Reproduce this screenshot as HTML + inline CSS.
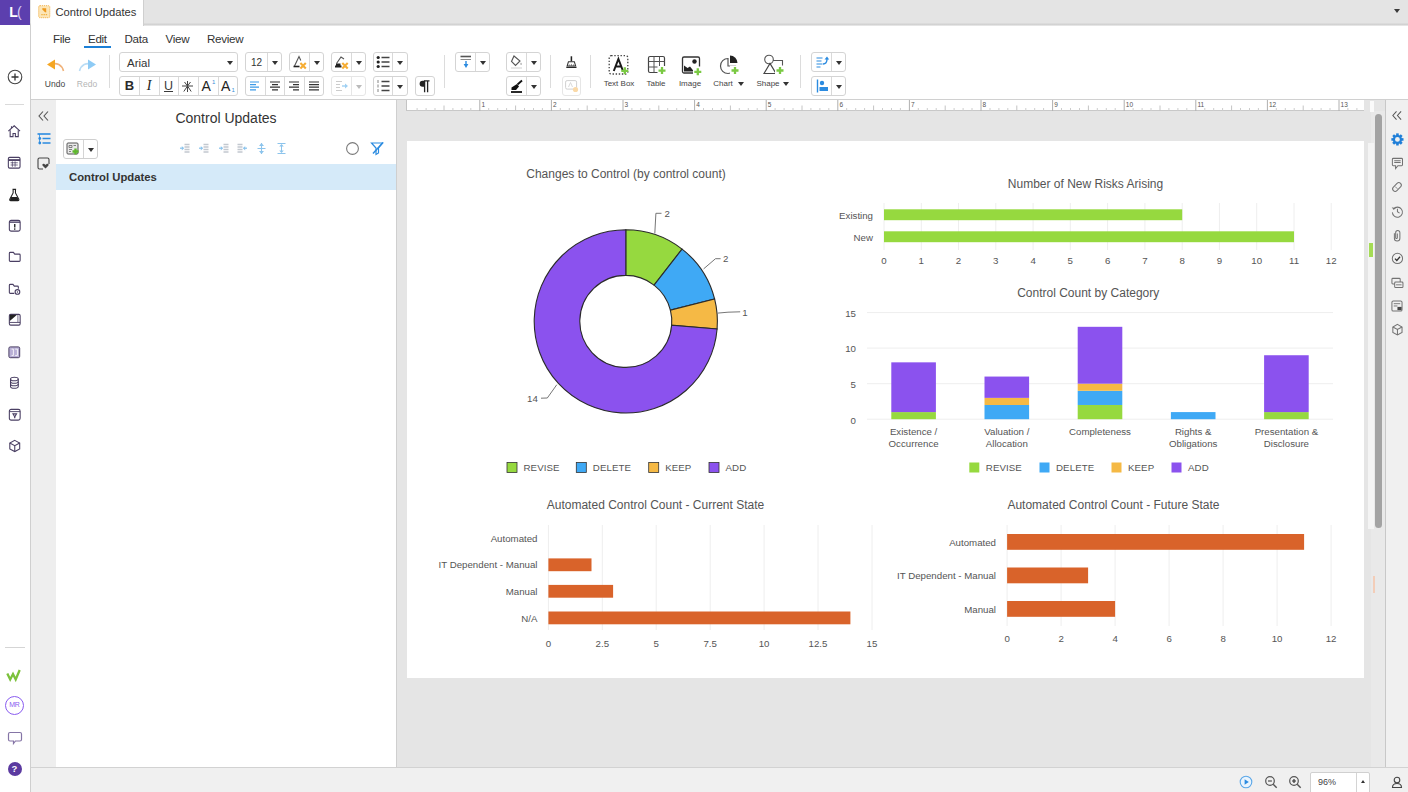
<!DOCTYPE html><html><head><meta charset="utf-8"><title>Control Updates</title><style>
*{box-sizing:border-box;margin:0;padding:0}
html,body{width:1408px;height:792px;overflow:hidden;background:#e5e5e5;font-family:"Liberation Sans",sans-serif;color:#333}
.abs{position:absolute}
#topbar{left:0;top:0;width:1408px;height:25px;background:linear-gradient(#e4e4e4 0,#e4e4e4 22.5px,#dbdbdb 23.5px,#cecece 25px)}
#logo{left:0;top:0;width:30px;height:25px;background:#5c3fae;color:#fff;font-size:14px;font-weight:bold;text-align:center;line-height:24px;letter-spacing:-0.8px}
#tab{left:31px;top:0;width:113px;height:26px;background:#fff;border-right:1px solid #cfcfcf;font-size:11.2px;color:#333;line-height:25px;padding-left:24.5px;white-space:nowrap}
#lrail{left:0;top:25px;width:31px;height:767px;background:#fff;border-right:1px solid #cfcfcf}
#toolbar{left:31px;top:26px;width:1377px;height:74px;background:#fff;border-bottom:1px solid #d0d0d0}
#strip{left:31px;top:100px;width:25px;height:668px;background:#eeeeee}
#outline{left:56px;top:100px;width:341px;height:668px;background:#fff;border-right:1px solid #cfcfcf}
#canvas{left:397px;top:100px;width:989px;height:668px;background:#e5e5e5}
#page{left:407px;top:141px;width:957px;height:537px;background:#fff}
#ruler{left:406px;top:100px;width:958px;height:11px;background:#fff;border-left:1px solid #c4c4c4;border-bottom:1px solid #c8c8c8}
#rrail{left:1385px;top:100px;width:23px;height:668px;background:#f0f0f0;border-left:1px solid #c8c8c8}
#status{left:31px;top:767px;width:1377px;height:25px;background:#f0f0f0;border-top:1px solid #d2d2d2}
#vtrack{left:1371px;top:111px;width:14px;height:657px;background:#e9e9e9}
#vthumb{left:1374.8px;top:114.3px;width:7.4px;height:414px;background:#a3a3a3;border-radius:4px}
.menu{top:31.6px;font-size:11.6px;color:#333;line-height:14px;letter-spacing:-0.3px}
.box{border:1px solid #d4d4d4;border-radius:3px;background:#fff}
.vsep{width:1px;background:#dcdcdc;top:55px;height:33px}
.div{width:1px;background:#d4d4d4;top:0;bottom:0}
.lbl{font-size:8px;color:#444;text-align:center;white-space:nowrap;line-height:10px}
.car{width:0;height:0;border-left:3px solid transparent;border-right:3px solid transparent;border-top:4px solid #333}
svg{position:absolute;overflow:visible}
</style></head><body>
<div id="topbar" class="abs"></div>
<div id="logo" class="abs">L<span style="color:#d9cdf5;font-weight:normal">(</span></div>
<div id="tab" class="abs">Control Updates</div>
<div id="lrail" class="abs"></div>
<div id="toolbar" class="abs"></div>
<div id="strip" class="abs"></div>
<div id="outline" class="abs"></div>
<div id="canvas" class="abs"></div>
<div id="ruler" class="abs"></div>
<div id="page" class="abs"></div>
<div id="vtrack" class="abs"></div><div id="vthumb" class="abs"></div>
<div id="rrail" class="abs"></div>
<div id="status" class="abs"></div>
<svg style="left:38px;top:5.3px" width="12.5" height="13.4" viewBox="0 0 12.5 13.4"><rect x="0.7" y="0.7" width="11.1" height="12" rx="1.2" fill="#fce6b8" stroke="#f3b44f" stroke-width="1" stroke-dasharray="1.2 0.8"/><path d="M4 3.2h4.2v4.2z" fill="#ee9a1f"/><path d="M7.8 7L4.6 3.8" stroke="#ee9a1f" stroke-width="1.4"/><path d="M3.3 9.6h6" stroke="#f0b040" stroke-width="1.3" stroke-dasharray="1.4 0.8"/></svg>
<div class="abs" style="left:1394px;top:8.5px;width:0;height:0;border-left:3.6px solid transparent;border-right:3.6px solid transparent;border-top:4.2px solid #3a3a3a"></div>
<div class="abs menu" style="left:53px">File</div>
<div class="abs menu" style="left:88px">Edit</div>
<div class="abs menu" style="left:124.5px">Data</div>
<div class="abs menu" style="left:165.5px">View</div>
<div class="abs menu" style="left:207px">Review</div>
<div class="abs" style="left:84px;top:46px;width:27px;height:2px;background:#1b7fd6"></div>
<svg style="left:45px;top:56.5px" width="22" height="16" viewBox="0 0 22 16"><path d="M5 7.5C12 5 17 8 18.5 14" fill="none" stroke="#f0b27a" stroke-width="1.6"/><path d="M2 7.5L10 2.5V12.5Z" fill="#f5a623"/></svg>
<div class="abs lbl" style="left:40px;top:78.5px;width:30px;color:#444;font-size:8.5px">Undo</div>
<svg style="left:76px;top:56.5px" width="22" height="16" viewBox="0 0 22 16"><path d="M17 7.5C10 5 5 8 3.5 14" fill="none" stroke="#b9dcf5" stroke-width="1.6"/><path d="M20 7.5L12 2.5V12.5Z" fill="#8ecbf5"/></svg>
<div class="abs lbl" style="left:72px;top:78.5px;width:30px;color:#b5b5b5;font-size:8.5px">Redo</div>
<div class="abs vsep" style="left:108.5px"></div>
<div class="abs vsep" style="left:444.3px"></div>
<div class="abs vsep" style="left:549.5px"></div>
<div class="abs vsep" style="left:590.3px"></div>
<div class="abs vsep" style="left:799.8px"></div>
<div class="abs box" style="left:119px;top:52px;width:119px;height:20px;font-size:11.5px;line-height:21px;padding-left:7px;color:#333">Arial</div>
<div class="abs car" style="left:227px;top:61px"></div>
<div class="abs box" style="left:119px;top:76px;width:119px;height:20px"></div>
<div class="abs" style="left:138.8px;top:77px;width:1px;height:18px;background:#d9d9d9"></div>
<div class="abs" style="left:158.6px;top:77px;width:1px;height:18px;background:#d9d9d9"></div>
<div class="abs" style="left:178.4px;top:77px;width:1px;height:18px;background:#d9d9d9"></div>
<div class="abs" style="left:198.2px;top:77px;width:1px;height:18px;background:#d9d9d9"></div>
<div class="abs" style="left:218.0px;top:77px;width:1px;height:18px;background:#d9d9d9"></div>
<div style="position:absolute;top:77px;width:20px;height:18px;text-align:center;line-height:18px;color:#222;left:119.5px;font-size:13px;font-weight:bold;color:#2a2a2a">B</div>
<div style="position:absolute;top:77px;width:20px;height:18px;text-align:center;line-height:18px;color:#222;left:139px;font-size:14px;font-style:italic;font-family:'Liberation Serif',serif">I</div>
<div style="position:absolute;top:77px;width:20px;height:18px;text-align:center;line-height:18px;color:#222;left:158.5px;font-size:12.5px;text-decoration:underline;color:#3a3a3a">U</div>
<svg style="left:181px;top:80px" width="13" height="13" viewBox="0 0 13 13"><path d="M1 6h11M6.500 1v11M6.500 6L2.800 11.500M6.500 6l3.700 5.500M6.500 6L3.500 2M6.500 6l3-4" stroke="#444" stroke-width="1" fill="none"/></svg>
<div style="position:absolute;top:77px;width:20px;height:18px;text-align:center;line-height:18px;color:#222;left:198.5px;font-size:14px;text-align:left;padding-left:3px">A<span style="position:absolute;left:13.5px;top:-4px;font-size:6px;color:#3b8fd8">1</span></div>
<div style="position:absolute;top:77px;width:20px;height:18px;text-align:center;line-height:18px;color:#222;left:218px;font-size:14px;text-align:left;padding-left:3px">A<span style="position:absolute;left:13.5px;top:3.5px;font-size:6px;color:#3b8fd8">1</span></div>
<div class="abs box" style="left:245px;top:52px;width:37px;height:20px"></div>
<div class="abs" style="left:267px;top:53px;width:1px;height:18px;background:#d9d9d9"></div>
<div class="abs car" style="left:271.9px;top:60.5px"></div>
<div class="abs" style="left:246px;top:53px;width:21px;height:18px;font-size:10px;line-height:20px;text-align:center;color:#333">12</div>
<div class="abs box" style="left:289px;top:52px;width:35px;height:20px"></div>
<div class="abs" style="left:309px;top:53px;width:1px;height:18px;background:#d9d9d9"></div>
<div class="abs car" style="left:313.9px;top:60.5px"></div>
<svg style="left:291.5px;top:54px" width="17" height="16" viewBox="0 0 17 16"><path d="M2.5 12L7 2.5l1.8 4" fill="none" stroke="#555" stroke-width="1.1"/><path d="M1.5 12.5h6" stroke="#222" stroke-width="1.6"/><path d="M8.4 9l5.4 5.4M13.8 9l-5.400 5.400" stroke="#f6ad33" stroke-width="2.1"/></svg>
<div class="abs box" style="left:331px;top:52px;width:35px;height:20px"></div>
<div class="abs" style="left:350.6px;top:53px;width:1px;height:18px;background:#d9d9d9"></div>
<div class="abs car" style="left:355.7px;top:60.5px"></div>
<svg style="left:332.500px;top:54px" width="18" height="16" viewBox="0 0 18 16"><path d="M3.5 9.5L8 3l3 2" fill="none" stroke="#555" stroke-width="1.1"/><path d="M2 12.5h6.5M3 10.5h4.5" stroke="#222" stroke-width="1.8"/><path d="M9.300 9l5.400 5.400M14.700 9l-5.400 5.400" stroke="#f6ad33" stroke-width="2.1"/></svg>
<div class="abs box" style="left:372.5px;top:52px;width:35px;height:20px"></div>
<div class="abs" style="left:392.2px;top:53px;width:1px;height:18px;background:#d9d9d9"></div>
<div class="abs car" style="left:397.2px;top:60.5px"></div>
<svg style="left:376px;top:55px" width="15" height="14" viewBox="0 0 15 14"><circle cx="2.2" cy="2.5" r="1.6" fill="#222"/><circle cx="2.2" cy="7" r="1.6" fill="#222"/><circle cx="2.2" cy="11.5" r="1.6" fill="#222"/><path d="M5.5 2.5h8M5.5 7h8M5.5 11.5h8" stroke="#444" stroke-width="1.3"/></svg>
<div class="abs box" style="left:245px;top:76px;width:79px;height:20px"></div>
<div class="abs" style="left:264.6px;top:77px;width:1px;height:18px;background:#d9d9d9"></div>
<div class="abs" style="left:284.2px;top:77px;width:1px;height:18px;background:#d9d9d9"></div>
<div class="abs" style="left:303.8px;top:77px;width:1px;height:18px;background:#d9d9d9"></div>
<svg style="left:250px;top:81px" width="11" height="10" viewBox="0 0 11 10"><path d="M0 1.0h9M0 3.6h6M0 6.2h9M0 8.8h6" stroke="#3b9ae8" stroke-width="1.2"/></svg>
<svg style="left:269.5px;top:81px" width="11" height="10" viewBox="0 0 11 10"><path d="M0 1.0h10M2 3.6h6M0 6.2h10M2 8.8h6" stroke="#333" stroke-width="1.2"/></svg>
<svg style="left:289px;top:81px" width="11" height="10" viewBox="0 0 11 10"><path d="M0 1.0h10M4 3.6h6M0 6.2h10M4 8.8h6" stroke="#333" stroke-width="1.2"/></svg>
<svg style="left:308.5px;top:81px" width="11" height="10" viewBox="0 0 11 10"><path d="M0 1.0h10M0 3.6h10M0 6.2h10M0 8.8h10" stroke="#333" stroke-width="1.2"/></svg>
<div class="abs box" style="left:331px;top:76px;width:35px;height:20px;border-color:#e6e6e6"></div>
<div class="abs" style="left:350.6px;top:77px;width:1px;height:18px;background:#e6e6e6"></div>
<div class="abs car" style="left:355.7px;top:84.5px;border-top-color:#bbb"></div>
<svg style="left:335px;top:80px" width="14" height="12" viewBox="0 0 14 12"><path d="M1 1.5h6M1 4.5h4M1 7.5h4M1 10.5h6" stroke="#ccc" stroke-width="1.1"/><path d="M7 6h5" stroke="#9fd0f3" stroke-width="1.4"/><path d="M10 3.5l3 2.5-3 2.5z" fill="#9fd0f3"/></svg>
<div class="abs box" style="left:372.5px;top:76px;width:35px;height:20px"></div>
<div class="abs" style="left:392.2px;top:77px;width:1px;height:18px;background:#d9d9d9"></div>
<div class="abs car" style="left:397.2px;top:84.5px"></div>
<svg style="left:376px;top:79px" width="15" height="14" viewBox="0 0 15 14"><path d="M2 1v3M2 5.5v3M2 10v3" stroke="#777" stroke-width="0.9"/><path d="M5.5 2.5h8M5.5 7h8M5.5 11.5h8" stroke="#444" stroke-width="1.3"/></svg>
<div class="abs box" style="left:414.5px;top:76px;width:20.5px;height:20px"></div>
<svg style="left:419px;top:80px" width="12" height="13" viewBox="0 0 12 13"><path d="M6 0.8H3.6a3 3 0 0 0 0 6H6z" fill="#222"/><path d="M5.6 0.8v11.5M8.6 0.8v11.5M5 0.8h5.5" stroke="#222" stroke-width="1.3" fill="none"/></svg>
<div class="abs box" style="left:455px;top:52px;width:35px;height:20px"></div>
<div class="abs" style="left:474.8px;top:53px;width:1px;height:18px;background:#d9d9d9"></div>
<div class="abs car" style="left:479.8px;top:60.5px"></div>
<svg style="left:459px;top:55px" width="14" height="15" viewBox="0 0 14 15"><path d="M1.500 1.500h10.500" stroke="#555" stroke-width="1.6"/><path d="M1.500 4.500h10.500" stroke="#888" stroke-width="1"/><path d="M7 6v4" stroke="#2b8be0" stroke-width="1.4"/><path d="M4.6 9L7 13l2.4-4z" fill="#2b8be0"/></svg>
<div class="abs box" style="left:506px;top:52px;width:34.5px;height:20px"></div>
<div class="abs" style="left:526px;top:53px;width:1px;height:18px;background:#d9d9d9"></div>
<div class="abs car" style="left:530.6px;top:60.5px"></div>
<svg style="left:509px;top:54px" width="16" height="16" viewBox="0 0 16 16"><path d="M5 2l6 5-4.5 4.5L2.5 7.5z" fill="none" stroke="#555" stroke-width="1.1"/><path d="M12 8.5c.8 1.2 1.2 2 .1 2.6-1.100-.6-.8-1.400-.100-2.600z" fill="#999"/><path d="M2 14h11" stroke="#ddd" stroke-width="1.4"/></svg>
<div class="abs box" style="left:506px;top:76px;width:34.5px;height:20px"></div>
<div class="abs" style="left:526px;top:77px;width:1px;height:18px;background:#d9d9d9"></div>
<div class="abs car" style="left:530.6px;top:84.5px"></div>
<svg style="left:509px;top:78px" width="16" height="16" viewBox="0 0 16 16"><path d="M2.500 9.500L8 6l2 2.600-3 3.400H2.500z" fill="#111"/><path d="M8.500 6.500L13 2.500" stroke="#111" stroke-width="1.800"/><path d="M2 14h11" stroke="#111" stroke-width="1.800"/></svg>
<svg style="left:565.300px;top:55px" width="12.800" height="14.500" viewBox="0 0 15 17"><path d="M7.500 1.500v6" stroke="#222" stroke-width="1.800"/><path d="M4 8h7l1.500 5H2.500z" fill="none" stroke="#333" stroke-width="1.200"/><path d="M1.500 14.500h12" stroke="#222" stroke-width="1.400"/><path d="M5 13v-2M7.500 13v-2.500M10 13v-2" stroke="#555" stroke-width="0.800"/></svg>
<div class="abs box" style="left:562px;top:76px;width:19px;height:20px;border-color:#e6e6e6"></div>
<svg style="left:565px;top:80px" width="14" height="13" viewBox="0 0 14 13"><rect x="0.600" y="0.600" width="11" height="8.500" rx="1.500" fill="none" stroke="#d0d0d0" stroke-width="1"/><path d="M3.500 7l2-4.500L7.500 7" stroke="#d4d4d4" fill="none" stroke-width="0.900"/><circle cx="10.500" cy="9.500" r="2.600" fill="#fad9a8"/></svg>
<svg style="left:608px;top:54px" width="24" height="22" viewBox="0 0 24 22"><rect x="1.2" y="1.6" width="18.6" height="18.4" rx="2" fill="none" stroke="#444" stroke-width="1.3" stroke-dasharray="1.4 1.7"/><path d="M5.800 17L10.400 5l4.600 12M7.600 12.600h5.600" fill="none" stroke="#1a1a1a" stroke-width="2"/><path d="M13.3 16.8h7M16.8 13.3v7" stroke="#7ac943" stroke-width="2.300"/></svg>
<div class="abs lbl" style="left:598px;top:78.7px;width:42px">Text Box</div>
<svg style="left:646.8px;top:55px" width="24" height="22" viewBox="0 0 24 22"><rect x="1.500" y="1.500" width="16" height="16" rx="1.500" fill="none" stroke="#444" stroke-width="1.200"/><path d="M1.500 6.500h16M1.500 12h16M7 1.500v16M12.500 1.500v16" stroke="#555" stroke-width="1"/><rect x="10.500" y="11" width="9" height="9" fill="#fff"/><path d="M11.5 15.6h7M15 12.1v7" stroke="#7ac943" stroke-width="2.300"/></svg>
<div class="abs lbl" style="left:641px;top:78.7px;width:30px">Table</div>
<svg style="left:680.5px;top:55px" width="24" height="22" viewBox="0 0 24 22"><rect x="1.500" y="2" width="17" height="16" rx="1.500" fill="none" stroke="#333" stroke-width="1.300"/><circle cx="13.500" cy="6.500" r="2.200" fill="#222"/><path d="M3 16.500v-6l3.500 2.500 2.500-1.500 4 5z" fill="#222"/><rect x="12" y="11.500" width="9" height="9" fill="#fff"/><path d="M13.3 16.8h7M16.8 13.3v7" stroke="#7ac943" stroke-width="2.300"/></svg>
<div class="abs lbl" style="left:675px;top:78.7px;width:30px">Image</div>
<svg style="left:719px;top:54px" width="24" height="22" viewBox="0 0 24 22"><path d="M9 4.500a7.500 7.500 0 1 0 7.500 7.500H9z" fill="none" stroke="#555" stroke-width="1.200"/><path d="M11 1.500a7.500 7.500 0 0 1 7.500 7.500H11z" fill="#222"/><rect x="11" y="11.500" width="9" height="9" fill="#fff"/><path d="M12.5 16.5h7M16 13.0v7" stroke="#7ac943" stroke-width="2.300"/></svg>
<div class="abs lbl" style="left:706px;top:78.7px;width:34px">Chart</div><div class="abs car" style="left:738px;top:82px"></div>
<svg style="left:762px;top:54px" width="26" height="22" viewBox="0 0 26 22"><circle cx="7" cy="5.500" r="4.300" fill="none" stroke="#555" stroke-width="1.100"/><path d="M11 6.500h9.500v6" fill="none" stroke="#555" stroke-width="1.100"/><path d="M2 19.500l6-10 6 10z" fill="none" stroke="#444" stroke-width="1.200"/><rect x="13" y="11.500" width="9" height="9" fill="#fff"/><path d="M14.5 16.5h7M18 13.0v7" stroke="#7ac943" stroke-width="2.300"/></svg>
<div class="abs lbl" style="left:751px;top:78.7px;width:34px">Shape</div><div class="abs car" style="left:783px;top:82px"></div>
<div class="abs box" style="left:811.3px;top:52px;width:34.6px;height:20px"></div>
<div class="abs" style="left:831.0999999999999px;top:53px;width:1px;height:18px;background:#d9d9d9"></div>
<div class="abs car" style="left:835.9px;top:60.5px"></div>
<svg style="left:816px;top:56px" width="13" height="12" viewBox="0 0 13 12"><path d="M0.500 2h6M0.500 5h5M0.500 8h6M0.500 11h4" stroke="#2b8be0" stroke-width="1.200"/><path d="M7 8c2.500 0 4-1.500 4-5" fill="none" stroke="#2b8be0" stroke-width="1.400"/><path d="M8.500 3.500L11 0.500l2.200 3z" fill="#2b8be0"/></svg>
<div class="abs box" style="left:811.3px;top:76px;width:34.6px;height:20px"></div>
<div class="abs" style="left:831.0999999999999px;top:77px;width:1px;height:18px;background:#d9d9d9"></div>
<div class="abs car" style="left:835.9px;top:84.5px"></div>
<svg style="left:816px;top:79px" width="13" height="14" viewBox="0 0 13 14"><path d="M1.500 0.500v13" stroke="#2b8be0" stroke-width="1.400"/><circle cx="6" cy="4" r="2.200" fill="#2b8be0"/><rect x="3.500" y="8" width="8.500" height="4" fill="#2b8be0"/></svg>
<svg style="left:6.50px;top:69.00px" width="16.00" height="16.00" viewBox="0 0 16 16" ><circle cx="8" cy="8" r="6.800" fill="none" stroke="#444" stroke-width="1.100"/><path d="M4.500 8h7M8 4.500v7" stroke="#333" stroke-width="1.300"/></svg>
<div class="abs" style="left:5px;top:103.5px;width:19px;height:1.3px;background:#dadada"></div>
<svg style="left:7.30px;top:123.80px" width="14.40" height="14.40" viewBox="0 0 16 16" ><path d="M1.500 8L8 2l6.500 6" fill="none" stroke="#4a3f63" stroke-width="1.2"/><path d="M3.500 7v7h3.200v-3.500h2.600V14h3.200V7" fill="none" stroke="#4a3f63" stroke-width="1.2"/><path d="M5 4.500V2.500" fill="none" stroke="#4a3f63" stroke-width="1.2"/></svg>
<svg style="left:7.30px;top:156.25px" width="14.40" height="13.50" viewBox="0 0 16 15" ><rect x="1.500" y="1.500" width="13" height="12" rx="1.500" fill="none" stroke="#4a3f63" stroke-width="1.2"/><path d="M1.500 4.500h13" stroke="#4a3f63" stroke-width="2"/><path d="M4 7.500h8M4 10h8M6 6v6M9 6v6" stroke="#4a3f63" stroke-width="0.800"/></svg>
<svg style="left:8.20px;top:188.25px" width="12.60" height="13.50" viewBox="0 0 14 15" ><path d="M5 1.500h4M5.700 1.500v4L2 12.500c-.3.800 0 1.500 1 1.500h8c1 0 1.300-.7 1-1.500L8.300 5.500v-4" fill="none" stroke="#222" stroke-width="1.200"/><path d="M3.500 10h7l1.500 3.500h-10z" fill="#222"/></svg>
<svg style="left:7.75px;top:219.25px" width="13.50" height="13.50" viewBox="0 0 15 15" ><rect x="1.500" y="1.500" width="12" height="12" rx="2" fill="none" stroke="#4a3f63" stroke-width="1.2"/><path d="M1.500 3.500h12" stroke="#4a3f63" stroke-width="1.500"/><path d="M7.500 5.500v4" stroke="#222" stroke-width="1.500"/><circle cx="7.500" cy="11.200" r="0.900" fill="#222"/></svg>
<svg style="left:7.75px;top:251.15px" width="13.50" height="11.70" viewBox="0 0 15 13" ><path d="M1.500 2.500c0-.6.400-1 1-1h3.500l1.500 2h5c.6 0 1 .4 1 1v6c0 .6-.4 1-1 1h-10c-.6 0-1-.4-1-1z" fill="none" stroke="#4a3f63" stroke-width="1.2"/></svg>
<svg style="left:7.75px;top:282.70px" width="13.50" height="12.60" viewBox="0 0 15 14" ><path d="M7 11.500H2.500c-.6 0-1-.4-1-1v-8c0-.6.400-1 1-1h3l1.500 2h3.500c.6 0 1 .4 1 1v2" fill="none" stroke="#4a3f63" stroke-width="1.2"/><circle cx="10.500" cy="10" r="2.600" fill="none" stroke="#4a3f63" stroke-width="1.2"/><circle cx="10.500" cy="10" r="0.800" fill="#4a3f63"/></svg>
<svg style="left:7.75px;top:313.25px" width="13.50" height="13.50" viewBox="0 0 15 15" ><rect x="1.500" y="1.500" width="12" height="12" rx="1.500" fill="none" stroke="#4a3f63" stroke-width="1.2"/><path d="M2 2h8L2 9z" fill="#222"/><path d="M1.500 10.500h12" stroke="#4a3f63" stroke-width="1"/><path d="M11 2v8" stroke="#4a3f63" stroke-width="0.800"/></svg>
<svg style="left:8.20px;top:345.70px" width="12.60" height="12.60" viewBox="0 0 14 14" ><rect x="1" y="1" width="12" height="12" rx="1.500" fill="#b9b0d6" stroke="#4a3f63" stroke-width="1.100"/><path d="M4 3.500h2v7H4M8 3.500h2.500v7H8" stroke="#fff" stroke-width="0.900" fill="none"/></svg>
<svg style="left:9.10px;top:376.25px" width="10.80" height="13.50" viewBox="0 0 12 15" ><ellipse cx="6" cy="3.300" rx="4.300" ry="2" fill="none" stroke="#4a3f63" stroke-width="1.2"/><path d="M1.700 3.300v8.400c0 1.100 1.900 2 4.300 2s4.300-.9 4.300-2V3.300" fill="none" stroke="#4a3f63" stroke-width="1.2"/><path d="M1.700 6c0 1.100 1.900 2 4.300 2s4.300-.9 4.300-2M1.700 8.800c0 1.100 1.900 2 4.300 2s4.300-.9 4.300-2" fill="none" stroke="#4a3f63" stroke-width="1.2"/></svg>
<svg style="left:7.75px;top:408.25px" width="13.50" height="13.50" viewBox="0 0 15 15" ><rect x="1.500" y="1.500" width="12" height="12" rx="2" fill="none" stroke="#4a3f63" stroke-width="1.2"/><path d="M1.500 4h12" stroke="#4a3f63" stroke-width="1"/><path d="M5.500 6.500h4L7.500 10z" fill="none" stroke="#4a3f63" stroke-width="1.2"/><path d="M7.500 10v1.500" fill="none" stroke="#4a3f63" stroke-width="1.2"/></svg>
<svg style="left:7.75px;top:439.02px" width="13.50" height="13.95" viewBox="0 0 15 15.5" ><path d="M7.500 1.500l5.500 3v6.500l-5.500 3-5.500-3V4.500z" fill="none" stroke="#4a3f63" stroke-width="1.2"/><path d="M2 4.500l5.500 3 5.500-3M7.500 7.500V14" fill="none" stroke="#4a3f63" stroke-width="1.2"/></svg>
<div class="abs" style="left:5px;top:647px;width:20px;height:1px;background:#d5d5d5"></div>
<svg style="left:6.30px;top:668.80px" width="15.00" height="12.00" viewBox="0 0 15 12" ><path d="M1.300 4.500l2.900 6L7 5l2.700 5.500L13.700 1" fill="none" stroke="#7cc13c" stroke-width="2.300" stroke-linejoin="miter"/></svg>
<div class="abs" style="left:5px;top:696px;width:19px;height:19px;border:1.500px solid #8a5cf0;border-radius:50%;font-size:7px;color:#8a5cf0;text-align:center;line-height:16px;letter-spacing:-0.3px">MR</div>
<svg style="left:6.50px;top:730.50px" width="16.00" height="14.00" viewBox="0 0 16 14" ><path d="M3 1.500h10c.8 0 1.500.7 1.500 1.500v5.500c0 .8-.7 1.500-1.500 1.500H8.500L6.500 12.500V10H3c-.8 0-1.500-.7-1.500-1.500V3c0-.8.700-1.500 1.500-1.500z" fill="none" stroke="#8575a6" stroke-width="1.200"/></svg>
<div class="abs" style="left:7.5px;top:762px;width:14px;height:14px;border-radius:50%;background:#5b3aa0;color:#fff;font-size:9.5px;font-weight:bold;text-align:center;line-height:14px">?</div>
<svg style="left:36.50px;top:109.50px" width="13.00" height="12.00" viewBox="0 0 13 12" ><path d="M6 1.500L2 6l4 4.500M11 1.500L7 6l4 4.500" fill="none" stroke="#555" stroke-width="1.100"/></svg>
<svg style="left:36.50px;top:132.00px" width="14.00" height="13.00" viewBox="0 0 14 13" ><path d="M0.500 2h13" stroke="#2b8be0" stroke-width="1.600"/><path d="M5.500 6.500h8M5.500 11h8" stroke="#2b8be0" stroke-width="1.600"/><path d="M2.500 2v9" fill="none" stroke="#2b8be0" stroke-width="0.800"/><circle cx="2.800" cy="6.500" r="1.400" fill="#2b8be0"/><circle cx="2.800" cy="11" r="1.400" fill="#2b8be0"/></svg>
<svg style="left:36.75px;top:157.25px" width="13.50" height="13.50" viewBox="0 0 13.5 13.5" ><path d="M1 2.500c0-.8.700-1.500 1.500-1.500h8c.8 0 1.500.7 1.500 1.500V7M6 12H2.500C1.700 12 1 11.300 1 10.500v-8" fill="none" stroke="#444" stroke-width="1.100"/><path d="M8.500 11.500L5.700 8.700c-.7-.8-.3-2 .8-2 .8 0 1.500.6 2 1.300.5-.7 1.200-1.300 2-1.300 1.100 0 1.500 1.200.8 2z" fill="#444"/></svg>
<div class="abs" style="left:56px;top:110px;width:340px;text-align:center;font-size:14px;color:#333;line-height:17px">Control Updates</div>
<div class="abs box" style="left:62.800px;top:138.800px;width:35.500px;height:20.500px;border-color:#cfcfcf"></div>
<div class="abs" style="left:83px;top:139.800px;width:1px;height:18.500px;background:#d4d4d4"></div>
<div class="abs car" style="left:87.800px;top:147.500px"></div>
<svg style="left:66.300px;top:142.300px" width="14" height="14" viewBox="0 0 14 14"><rect x="1" y="1" width="11" height="11" rx="1" fill="#e9e9e9" stroke="#555" stroke-width="1"/><path d="M3 3.500h3v2H3zM3 7.500h3M3 9.500h2M7.500 3.500h2.500" stroke="#666" stroke-width="0.800" fill="none"/><path d="M9.500 6.500v6M6.500 9.500h6" stroke="#5fb82e" stroke-width="2.400"/></svg>
<svg style="left:179.00px;top:143.45px" width="12.00" height="10.50" viewBox="0 0 12 10.5" ><path d="M5.500 1.500h5M5.500 4h5M5.500 6.500h5M5.500 9h5" stroke="#c2c8cf" stroke-width="1.300"/><path d="M1 5.200h3.500" stroke="#8cc4ec" stroke-width="1.300"/><path d="M2.800 3l2.200 2.200L2.800 7.500" fill="#8cc4ec" stroke="none"/></svg>
<svg style="left:198.00px;top:143.45px" width="12.00" height="10.50" viewBox="0 0 12 10.5" ><path d="M5.500 1.500h5M5.500 4h5M5.500 6.500h5M5.500 9h5" stroke="#c2c8cf" stroke-width="1.300"/><path d="M1 5.200h3.500" stroke="#8cc4ec" stroke-width="1.300"/><path d="M2.800 3l2.200 2.200L2.800 7.500" fill="#8cc4ec" stroke="none"/></svg>
<svg style="left:217.50px;top:143.45px" width="12.00" height="10.50" viewBox="0 0 12 10.5" ><path d="M5.500 1.500h5M5.500 4h5M5.500 6.500h5M5.500 9h5" stroke="#c2c8cf" stroke-width="1.300"/><path d="M1 5.200h3.500" stroke="#8cc4ec" stroke-width="1.300"/><path d="M2.800 3l2.200 2.200L2.800 7.500" fill="#8cc4ec" stroke="none"/></svg>
<svg style="left:235.50px;top:143.45px" width="12.00" height="10.50" viewBox="0 0 12 10.5" transform="scale(-1,1)"><path d="M5.500 1.500h5M5.500 4h5M5.500 6.500h5M5.500 9h5" stroke="#c2c8cf" stroke-width="1.300"/><path d="M1 5.200h3.500" stroke="#8cc4ec" stroke-width="1.300"/><path d="M2.800 3l2.200 2.200L2.800 7.500" fill="#8cc4ec" stroke="none"/></svg>
<svg style="left:256.80px;top:142.20px" width="9.00" height="13.00" viewBox="0 0 9 13" ><path d="M4.500 1v11" stroke="#8cc4ec" stroke-width="1.100"/><path d="M2 4l2.500-3L7 4zM2 9l2.500 3L7 9z" fill="#8cc4ec"/><path d="M0.500 6.500h8" stroke="#8cc4ec" stroke-width="1"/></svg>
<svg style="left:277.30px;top:142.20px" width="9.00" height="13.00" viewBox="0 0 9 13" ><path d="M0.500 1.500h8M0.500 11.500h8" stroke="#8cc4ec" stroke-width="1"/><path d="M2.200 4.500L4.500 2l2.300 2.500zM2.200 8.500L4.500 11l2.300-2.500z" fill="#8cc4ec"/><path d="M4.500 4v5" stroke="#8cc4ec" stroke-width="1"/></svg>
<svg style="left:345.00px;top:141.20px" width="15.00" height="15.00" viewBox="0 0 15 15" ><circle cx="7.500" cy="7.500" r="5.900" fill="none" stroke="#7a7a7a" stroke-width="1.100"/></svg>
<svg style="left:370.00px;top:141.20px" width="15.00" height="15.00" viewBox="0 0 15 15" ><path d="M1.500 2h11L8.500 7v5L6 13.500V7z" fill="none" stroke="#2b8be0" stroke-width="1.200"/><path d="M3 12.500L13 1.500" stroke="#2b8be0" stroke-width="1.500"/></svg>
<div class="abs" style="left:56px;top:164px;width:340px;height:26px;background:#d5eaf9;font-size:11.3px;font-weight:bold;color:#333;line-height:27px;padding-left:13px">Control Updates</div>
<svg style="left:406px;top:100px" width="957" height="11" viewBox="0 0 957 11" font-family="Liberation Sans, sans-serif"><path d="M11.1 8v3" stroke="#cdcdcd" stroke-width="1"/><path d="M20.1 8v3" stroke="#cdcdcd" stroke-width="1"/><path d="M29.0 8v3" stroke="#cdcdcd" stroke-width="1"/><path d="M38.0 5.500v5.500" stroke="#c4c4c4" stroke-width="1"/><path d="M46.9 8v3" stroke="#cdcdcd" stroke-width="1"/><path d="M55.9 8v3" stroke="#cdcdcd" stroke-width="1"/><path d="M64.8 8v3" stroke="#cdcdcd" stroke-width="1"/><path d="M73.8 0v11" stroke="#b0b0b0" stroke-width="1"/><text x="75.4" y="7" font-size="6.500" fill="#555">1</text><path d="M82.7 8v3" stroke="#cdcdcd" stroke-width="1"/><path d="M91.7 8v3" stroke="#cdcdcd" stroke-width="1"/><path d="M100.6 8v3" stroke="#cdcdcd" stroke-width="1"/><path d="M109.6 5.500v5.500" stroke="#c4c4c4" stroke-width="1"/><path d="M118.5 8v3" stroke="#cdcdcd" stroke-width="1"/><path d="M127.5 8v3" stroke="#cdcdcd" stroke-width="1"/><path d="M136.4 8v3" stroke="#cdcdcd" stroke-width="1"/><path d="M145.4 0v11" stroke="#b0b0b0" stroke-width="1"/><text x="147.0" y="7" font-size="6.500" fill="#555">2</text><path d="M154.3 8v3" stroke="#cdcdcd" stroke-width="1"/><path d="M163.3 8v3" stroke="#cdcdcd" stroke-width="1"/><path d="M172.2 8v3" stroke="#cdcdcd" stroke-width="1"/><path d="M181.2 5.500v5.500" stroke="#c4c4c4" stroke-width="1"/><path d="M190.1 8v3" stroke="#cdcdcd" stroke-width="1"/><path d="M199.1 8v3" stroke="#cdcdcd" stroke-width="1"/><path d="M208.0 8v3" stroke="#cdcdcd" stroke-width="1"/><path d="M217.0 0v11" stroke="#b0b0b0" stroke-width="1"/><text x="218.6" y="7" font-size="6.500" fill="#555">3</text><path d="M225.9 8v3" stroke="#cdcdcd" stroke-width="1"/><path d="M234.9 8v3" stroke="#cdcdcd" stroke-width="1"/><path d="M243.8 8v3" stroke="#cdcdcd" stroke-width="1"/><path d="M252.8 5.500v5.500" stroke="#c4c4c4" stroke-width="1"/><path d="M261.7 8v3" stroke="#cdcdcd" stroke-width="1"/><path d="M270.7 8v3" stroke="#cdcdcd" stroke-width="1"/><path d="M279.6 8v3" stroke="#cdcdcd" stroke-width="1"/><path d="M288.6 0v11" stroke="#b0b0b0" stroke-width="1"/><text x="290.2" y="7" font-size="6.500" fill="#555">4</text><path d="M297.5 8v3" stroke="#cdcdcd" stroke-width="1"/><path d="M306.5 8v3" stroke="#cdcdcd" stroke-width="1"/><path d="M315.4 8v3" stroke="#cdcdcd" stroke-width="1"/><path d="M324.4 5.500v5.500" stroke="#c4c4c4" stroke-width="1"/><path d="M333.3 8v3" stroke="#cdcdcd" stroke-width="1"/><path d="M342.3 8v3" stroke="#cdcdcd" stroke-width="1"/><path d="M351.2 8v3" stroke="#cdcdcd" stroke-width="1"/><path d="M360.2 0v11" stroke="#b0b0b0" stroke-width="1"/><text x="361.8" y="7" font-size="6.500" fill="#555">5</text><path d="M369.1 8v3" stroke="#cdcdcd" stroke-width="1"/><path d="M378.1 8v3" stroke="#cdcdcd" stroke-width="1"/><path d="M387.0 8v3" stroke="#cdcdcd" stroke-width="1"/><path d="M396.0 5.500v5.500" stroke="#c4c4c4" stroke-width="1"/><path d="M404.9 8v3" stroke="#cdcdcd" stroke-width="1"/><path d="M413.9 8v3" stroke="#cdcdcd" stroke-width="1"/><path d="M422.8 8v3" stroke="#cdcdcd" stroke-width="1"/><path d="M431.8 0v11" stroke="#b0b0b0" stroke-width="1"/><text x="433.4" y="7" font-size="6.500" fill="#555">6</text><path d="M440.7 8v3" stroke="#cdcdcd" stroke-width="1"/><path d="M449.7 8v3" stroke="#cdcdcd" stroke-width="1"/><path d="M458.6 8v3" stroke="#cdcdcd" stroke-width="1"/><path d="M467.6 5.500v5.500" stroke="#c4c4c4" stroke-width="1"/><path d="M476.5 8v3" stroke="#cdcdcd" stroke-width="1"/><path d="M485.5 8v3" stroke="#cdcdcd" stroke-width="1"/><path d="M494.4 8v3" stroke="#cdcdcd" stroke-width="1"/><path d="M503.4 0v11" stroke="#b0b0b0" stroke-width="1"/><text x="505.0" y="7" font-size="6.500" fill="#555">7</text><path d="M512.3 8v3" stroke="#cdcdcd" stroke-width="1"/><path d="M521.3 8v3" stroke="#cdcdcd" stroke-width="1"/><path d="M530.2 8v3" stroke="#cdcdcd" stroke-width="1"/><path d="M539.2 5.500v5.500" stroke="#c4c4c4" stroke-width="1"/><path d="M548.1 8v3" stroke="#cdcdcd" stroke-width="1"/><path d="M557.1 8v3" stroke="#cdcdcd" stroke-width="1"/><path d="M566.0 8v3" stroke="#cdcdcd" stroke-width="1"/><path d="M575.0 0v11" stroke="#b0b0b0" stroke-width="1"/><text x="576.6" y="7" font-size="6.500" fill="#555">8</text><path d="M584.0 8v3" stroke="#cdcdcd" stroke-width="1"/><path d="M592.9 8v3" stroke="#cdcdcd" stroke-width="1"/><path d="M601.8 8v3" stroke="#cdcdcd" stroke-width="1"/><path d="M610.8 5.500v5.500" stroke="#c4c4c4" stroke-width="1"/><path d="M619.8 8v3" stroke="#cdcdcd" stroke-width="1"/><path d="M628.7 8v3" stroke="#cdcdcd" stroke-width="1"/><path d="M637.6 8v3" stroke="#cdcdcd" stroke-width="1"/><path d="M646.6 0v11" stroke="#b0b0b0" stroke-width="1"/><text x="648.2" y="7" font-size="6.500" fill="#555">9</text><path d="M655.5 8v3" stroke="#cdcdcd" stroke-width="1"/><path d="M664.5 8v3" stroke="#cdcdcd" stroke-width="1"/><path d="M673.5 8v3" stroke="#cdcdcd" stroke-width="1"/><path d="M682.4 5.500v5.500" stroke="#c4c4c4" stroke-width="1"/><path d="M691.3 8v3" stroke="#cdcdcd" stroke-width="1"/><path d="M700.3 8v3" stroke="#cdcdcd" stroke-width="1"/><path d="M709.2 8v3" stroke="#cdcdcd" stroke-width="1"/><path d="M718.2 0v11" stroke="#b0b0b0" stroke-width="1"/><text x="719.8" y="7" font-size="6.500" fill="#555">10</text><path d="M727.1 8v3" stroke="#cdcdcd" stroke-width="1"/><path d="M736.1 8v3" stroke="#cdcdcd" stroke-width="1"/><path d="M745.0 8v3" stroke="#cdcdcd" stroke-width="1"/><path d="M754.0 5.500v5.500" stroke="#c4c4c4" stroke-width="1"/><path d="M762.9 8v3" stroke="#cdcdcd" stroke-width="1"/><path d="M771.9 8v3" stroke="#cdcdcd" stroke-width="1"/><path d="M780.8 8v3" stroke="#cdcdcd" stroke-width="1"/><path d="M789.8 0v11" stroke="#b0b0b0" stroke-width="1"/><text x="791.4" y="7" font-size="6.500" fill="#555">11</text><path d="M798.8 8v3" stroke="#cdcdcd" stroke-width="1"/><path d="M807.7 8v3" stroke="#cdcdcd" stroke-width="1"/><path d="M816.6 8v3" stroke="#cdcdcd" stroke-width="1"/><path d="M825.6 5.500v5.500" stroke="#c4c4c4" stroke-width="1"/><path d="M834.5 8v3" stroke="#cdcdcd" stroke-width="1"/><path d="M843.5 8v3" stroke="#cdcdcd" stroke-width="1"/><path d="M852.4 8v3" stroke="#cdcdcd" stroke-width="1"/><path d="M861.4 0v11" stroke="#b0b0b0" stroke-width="1"/><text x="863.0" y="7" font-size="6.500" fill="#555">12</text><path d="M870.3 8v3" stroke="#cdcdcd" stroke-width="1"/><path d="M879.3 8v3" stroke="#cdcdcd" stroke-width="1"/><path d="M888.2 8v3" stroke="#cdcdcd" stroke-width="1"/><path d="M897.2 5.500v5.500" stroke="#c4c4c4" stroke-width="1"/><path d="M906.1 8v3" stroke="#cdcdcd" stroke-width="1"/><path d="M915.1 8v3" stroke="#cdcdcd" stroke-width="1"/><path d="M924.0 8v3" stroke="#cdcdcd" stroke-width="1"/><path d="M933.0 0v11" stroke="#b0b0b0" stroke-width="1"/><text x="934.6" y="7" font-size="6.500" fill="#555">13</text><path d="M941.9 8v3" stroke="#cdcdcd" stroke-width="1"/><path d="M950.9 8v3" stroke="#cdcdcd" stroke-width="1"/></svg>
<div class="abs" style="left:1369.500px;top:101px;width:4px;height:10.500px;background:#fafafa"></div>
<div class="abs" style="left:1367.500px;top:143px;width:6.500px;height:386px;background:#f4f4f4"></div>
<div class="abs" style="left:1369.3px;top:243px;width:4.200px;height:13.500px;background:#a5dc55"></div>
<div class="abs" style="left:1372.500px;top:576px;width:2px;height:17px;background:#f3cdb8"></div>
<svg style="left:1391.02px;top:109.98px" width="11.96" height="11.04" viewBox="0 0 13 12" ><path d="M6 1.500L2 6l4 4.500M11 1.500L7 6l4 4.500" fill="none" stroke="#555" stroke-width="1.100"/></svg>
<svg style="left:1390.56px;top:132.56px" width="12.88" height="12.88" viewBox="0 0 14 14" ><g transform="translate(7,7)"><rect x="-1.400" y="-6.600" width="2.800" height="3" fill="#1f7fd8" transform="rotate(0)"/><rect x="-1.400" y="-6.600" width="2.800" height="3" fill="#1f7fd8" transform="rotate(45)"/><rect x="-1.400" y="-6.600" width="2.800" height="3" fill="#1f7fd8" transform="rotate(90)"/><rect x="-1.400" y="-6.600" width="2.800" height="3" fill="#1f7fd8" transform="rotate(135)"/><rect x="-1.400" y="-6.600" width="2.800" height="3" fill="#1f7fd8" transform="rotate(180)"/><rect x="-1.400" y="-6.600" width="2.800" height="3" fill="#1f7fd8" transform="rotate(225)"/><rect x="-1.400" y="-6.600" width="2.800" height="3" fill="#1f7fd8" transform="rotate(270)"/><rect x="-1.400" y="-6.600" width="2.800" height="3" fill="#1f7fd8" transform="rotate(315)"/><circle r="3.800" fill="none" stroke="#1f7fd8" stroke-width="2.300"/></g></svg>
<svg style="left:1390.56px;top:157.06px" width="12.88" height="12.88" viewBox="0 0 14 14" ><path d="M2.500 1.500h9c.6 0 1 .4 1 1v6c0 .6-.4 1-1 1H7.500L5 12.500V9.500H2.500c-.6 0-1-.4-1-1v-6c0-.6.400-1 1-1z" fill="none" stroke="#727272" stroke-width="1.100"/><path d="M3.500 4h7M3.500 6h7" stroke="#727272" stroke-width="1.200"/></svg>
<svg style="left:1391.02px;top:181.02px" width="11.96" height="11.96" viewBox="0 0 13 13" ><rect x="-2.700" y="-5.500" width="5.400" height="11" rx="2.700" transform="translate(6.500,6.500) rotate(45)" fill="none" stroke="#727272" stroke-width="1.100"/><path d="M4.500 6l2.500 2.500" stroke="#727272" stroke-width="0.900"/></svg>
<svg style="left:1390.56px;top:204.56px" width="12.88" height="12.88" viewBox="0 0 14 14" ><path d="M2.600 4.500A5.500 5.500 0 1 1 1.500 8" fill="none" stroke="#727272" stroke-width="1.100"/><path d="M0.800 2.500l2 2.800 2.600-1.800" fill="#727272" stroke="none"/><path d="M7 4v3.300l2.300 1.500" fill="none" stroke="#727272" stroke-width="1.100"/></svg>
<svg style="left:1392.86px;top:228.56px" width="8.28" height="12.88" viewBox="0 0 9 14" ><path d="M1.500 4.500v5.500a3 3 0 0 0 6 0V4a2.300 2.300 0 0 0-4.600 0v5.500a.9.900 0 0 0 1.800 0V5" fill="none" stroke="#727272" stroke-width="1.100"/></svg>
<svg style="left:1390.56px;top:252.06px" width="12.88" height="12.88" viewBox="0 0 14 14" ><circle cx="7" cy="7" r="5.600" fill="none" stroke="#727272" stroke-width="1.100"/><path d="M4.300 7.200l2 2 3.500-4" fill="none" stroke="#333" stroke-width="1.400"/></svg>
<svg style="left:1390.56px;top:276.52px" width="12.88" height="11.96" viewBox="0 0 14 13" ><rect x="1" y="1.500" width="9" height="6" rx="1" fill="none" stroke="#727272" stroke-width="1.100"/><rect x="4" y="5.500" width="9" height="6" rx="1" fill="#f0f0f0" stroke="#727272" stroke-width="1.100"/><path d="M5.500 8.500h6" stroke="#727272" stroke-width="1"/></svg>
<svg style="left:1391.02px;top:300.02px" width="11.96" height="11.96" viewBox="0 0 13 13" ><rect x="1" y="1" width="11" height="11" rx="1.500" fill="none" stroke="#727272" stroke-width="1.100"/><path d="M3 4h7M3 6.500h4" stroke="#727272" stroke-width="1"/><rect x="7" y="7.500" width="4.500" height="3.500" fill="#444"/></svg>
<svg style="left:1390.56px;top:322.83px" width="12.88" height="13.34" viewBox="0 0 14 14.5" ><path d="M7 1.500l5 2.800v6l-5 2.800-5-2.800v-6z" fill="none" stroke="#727272" stroke-width="1.100"/><path d="M2 4.300l5 2.800 5-2.800M7 7.100v6" fill="none" stroke="#727272" stroke-width="1.100"/></svg>
<svg style="left:1239.00px;top:774.50px" width="14.00" height="14.00" viewBox="0 0 14 14" ><circle cx="7" cy="7" r="5.800" fill="#eaf4fd" stroke="#5aa7e8" stroke-width="1.100"/><path d="M5.600 4.300L9.800 7l-4.200 2.700z" fill="#2b8be0"/></svg>
<svg style="left:1264.00px;top:775.00px" width="14.00" height="14.00" viewBox="0 0 14 14" ><circle cx="6" cy="6" r="4.300" fill="none" stroke="#555" stroke-width="1.200"/><path d="M9.200 9.200l3.500 3.500" stroke="#555" stroke-width="1.400"/><path d="M4 6h4" stroke="#444" stroke-width="1.100"/></svg>
<svg style="left:1288.00px;top:775.00px" width="14.00" height="14.00" viewBox="0 0 14 14" ><circle cx="6" cy="6" r="4.300" fill="none" stroke="#555" stroke-width="1.200"/><path d="M9.200 9.200l3.500 3.500" stroke="#555" stroke-width="1.400"/><path d="M4 6h4M6 4v4" stroke="#333" stroke-width="1.200"/></svg>
<div class="abs box" style="left:1310px;top:771.500px;width:60px;height:22px;border-color:#d0d0d0;border-radius:2px"></div>
<div class="abs" style="left:1356px;top:772.500px;width:1px;height:20px;background:#d4d4d4"></div>
<div class="abs" style="left:1318px;top:777px;font-size:9px;color:#444;line-height:10px">96%</div>
<div class="abs" style="left:1360.500px;top:780px;width:0;height:0;border-left:2.500px solid transparent;border-right:2.500px solid transparent;border-bottom:3.500px solid #333"></div>
<svg style="left:1391.00px;top:775.50px" width="12.00" height="13.00" viewBox="0 0 12 13" ><circle cx="6" cy="4" r="2.800" fill="none" stroke="#444" stroke-width="1.100"/><path d="M1.500 11.500c0-2.500 2-4 4.500-4s4.500 1.500 4.500 4z" fill="none" stroke="#444" stroke-width="1.100"/></svg>
<svg class="abs" style="left:0;top:0" width="1408" height="792" viewBox="0 0 1408 792" font-family="Liberation Sans, sans-serif">
<text x="626.0" y="177.5" font-size="12" fill="#555" text-anchor="middle">Changes to Control (by control count)</text>
<path d="M625.80 229.80A91.60 91.60 0 0 1 682.06 249.11L654.05 285.10A46.00 46.00 0 0 0 625.80 275.40Z" fill="#96d93f" stroke="#2b2b2b" stroke-width="1.1"/>
<path d="M682.06 249.11A91.60 91.60 0 0 1 714.60 298.91L670.39 310.11A46.00 46.00 0 0 0 654.05 285.10Z" fill="#3fa9f5" stroke="#2b2b2b" stroke-width="1.1"/>
<path d="M714.60 298.91A91.60 91.60 0 0 1 717.09 328.96L671.64 325.20A46.00 46.00 0 0 0 670.39 310.11Z" fill="#f5b945" stroke="#2b2b2b" stroke-width="1.1"/>
<path d="M717.09 328.96A91.60 91.60 0 1 1 625.80 229.80L625.80 275.40A46.00 46.00 0 1 0 671.64 325.20Z" fill="#8b52ee" stroke="#2b2b2b" stroke-width="1.1"/>
<path d="M654.8 233.5L655.9 213.3L661.5 213.3" fill="none" stroke="#666" stroke-width="0.9"/>
<text x="664.5" y="217.0" font-size="9.7" fill="#555" text-anchor="start">2</text>
<path d="M703.6 268.9L715.5 258.7L720.6 258.7" fill="none" stroke="#666" stroke-width="0.9"/>
<text x="723.0" y="262.2" font-size="9.7" fill="#555" text-anchor="start">2</text>
<path d="M717.8 313.1L728.0 312.2L740.2 311.8" fill="none" stroke="#666" stroke-width="0.9"/>
<text x="742.3" y="315.6" font-size="9.7" fill="#555" text-anchor="start">1</text>
<path d="M556.8 384.7L547.3 398.0L541.0 398.2" fill="none" stroke="#666" stroke-width="0.9"/>
<text x="537.8" y="401.7" font-size="9.7" fill="#555" text-anchor="end">14</text>
<rect x="507.0" y="462.5" width="10" height="10" fill="#96d93f" stroke="#333" stroke-width="0.8"/>
<text x="523.5" y="471.3" font-size="9.7" fill="#555" letter-spacing="0.1">REVISE</text>
<rect x="576.3" y="462.5" width="10" height="10" fill="#3fa9f5" stroke="#333" stroke-width="0.8"/>
<text x="592.8" y="471.3" font-size="9.7" fill="#555" letter-spacing="0.1">DELETE</text>
<rect x="648.7" y="462.5" width="10" height="10" fill="#f5b945" stroke="#333" stroke-width="0.8"/>
<text x="665.2" y="471.3" font-size="9.7" fill="#555" letter-spacing="0.1">KEEP</text>
<rect x="709.0" y="462.5" width="10" height="10" fill="#8b52ee" stroke="#333" stroke-width="0.8"/>
<text x="725.5" y="471.3" font-size="9.7" fill="#555" letter-spacing="0.1">ADD</text>
<text x="1085.5" y="187.5" font-size="12" fill="#555" text-anchor="middle">Number of New Risks Arising</text>
<line x1="884.0" y1="203" x2="884.0" y2="250" stroke="#eeeeee" stroke-width="1"/>
<text x="884.0" y="264" font-size="9.7" fill="#555" text-anchor="middle">0</text>
<line x1="921.3" y1="203" x2="921.3" y2="250" stroke="#eeeeee" stroke-width="1"/>
<text x="921.3" y="264" font-size="9.7" fill="#555" text-anchor="middle">1</text>
<line x1="958.5" y1="203" x2="958.5" y2="250" stroke="#eeeeee" stroke-width="1"/>
<text x="958.5" y="264" font-size="9.7" fill="#555" text-anchor="middle">2</text>
<line x1="995.8" y1="203" x2="995.8" y2="250" stroke="#eeeeee" stroke-width="1"/>
<text x="995.8" y="264" font-size="9.7" fill="#555" text-anchor="middle">3</text>
<line x1="1033.1" y1="203" x2="1033.1" y2="250" stroke="#eeeeee" stroke-width="1"/>
<text x="1033.1" y="264" font-size="9.7" fill="#555" text-anchor="middle">4</text>
<line x1="1070.3" y1="203" x2="1070.3" y2="250" stroke="#eeeeee" stroke-width="1"/>
<text x="1070.3" y="264" font-size="9.7" fill="#555" text-anchor="middle">5</text>
<line x1="1107.6" y1="203" x2="1107.6" y2="250" stroke="#eeeeee" stroke-width="1"/>
<text x="1107.6" y="264" font-size="9.7" fill="#555" text-anchor="middle">6</text>
<line x1="1144.9" y1="203" x2="1144.9" y2="250" stroke="#eeeeee" stroke-width="1"/>
<text x="1144.9" y="264" font-size="9.7" fill="#555" text-anchor="middle">7</text>
<line x1="1182.2" y1="203" x2="1182.2" y2="250" stroke="#eeeeee" stroke-width="1"/>
<text x="1182.2" y="264" font-size="9.7" fill="#555" text-anchor="middle">8</text>
<line x1="1219.4" y1="203" x2="1219.4" y2="250" stroke="#eeeeee" stroke-width="1"/>
<text x="1219.4" y="264" font-size="9.7" fill="#555" text-anchor="middle">9</text>
<line x1="1256.7" y1="203" x2="1256.7" y2="250" stroke="#eeeeee" stroke-width="1"/>
<text x="1256.7" y="264" font-size="9.7" fill="#555" text-anchor="middle">10</text>
<line x1="1294.0" y1="203" x2="1294.0" y2="250" stroke="#eeeeee" stroke-width="1"/>
<text x="1294.0" y="264" font-size="9.7" fill="#555" text-anchor="middle">11</text>
<line x1="1331.2" y1="203" x2="1331.2" y2="250" stroke="#eeeeee" stroke-width="1"/>
<text x="1331.2" y="264" font-size="9.7" fill="#555" text-anchor="middle">12</text>
<rect x="884.0" y="209.3" width="298.2" height="10.9" fill="#96d93f"/>
<rect x="884.0" y="231.3" width="410.0" height="10.9" fill="#96d93f"/>
<text x="873" y="218.5" font-size="9.7" fill="#555" text-anchor="end">Existing</text>
<text x="873" y="240.5" font-size="9.7" fill="#555" text-anchor="end">New</text>
<text x="1088.2" y="297.3" font-size="12" fill="#555" text-anchor="middle">Control Count by Category</text>
<line x1="867" y1="419.2" x2="1333" y2="419.2" stroke="#eeeeee" stroke-width="1"/>
<text x="856" y="423.5" font-size="9.7" fill="#555" text-anchor="end">0</text>
<line x1="867" y1="383.7" x2="1333" y2="383.7" stroke="#eeeeee" stroke-width="1"/>
<text x="856" y="388.0" font-size="9.7" fill="#555" text-anchor="end">5</text>
<line x1="867" y1="348.1" x2="1333" y2="348.1" stroke="#eeeeee" stroke-width="1"/>
<text x="856" y="352.4" font-size="9.7" fill="#555" text-anchor="end">10</text>
<line x1="867" y1="312.6" x2="1333" y2="312.6" stroke="#eeeeee" stroke-width="1"/>
<text x="856" y="316.9" font-size="9.7" fill="#555" text-anchor="end">15</text>
<rect x="891.3" y="412.09" width="44.6" height="7.11" fill="#96d93f"/>
<rect x="891.3" y="362.34" width="44.6" height="49.75" fill="#8b52ee"/>
<text x="913.6" y="435.3" font-size="9.7" fill="#555" text-anchor="middle">Existence /</text>
<text x="913.6" y="447.3" font-size="9.7" fill="#555" text-anchor="middle">Occurrence</text>
<rect x="984.5" y="404.99" width="44.6" height="14.21" fill="#3fa9f5"/>
<rect x="984.5" y="397.88" width="44.6" height="7.11" fill="#f5b945"/>
<rect x="984.5" y="376.56" width="44.6" height="21.32" fill="#8b52ee"/>
<text x="1006.8" y="435.3" font-size="9.7" fill="#555" text-anchor="middle">Valuation /</text>
<text x="1006.8" y="447.3" font-size="9.7" fill="#555" text-anchor="middle">Allocation</text>
<rect x="1077.7" y="404.99" width="44.6" height="14.21" fill="#96d93f"/>
<rect x="1077.7" y="390.77" width="44.6" height="14.21" fill="#3fa9f5"/>
<rect x="1077.7" y="383.66" width="44.6" height="7.11" fill="#f5b945"/>
<rect x="1077.7" y="326.81" width="44.6" height="56.86" fill="#8b52ee"/>
<text x="1100.0" y="435.3" font-size="9.7" fill="#555" text-anchor="middle">Completeness</text>
<rect x="1170.9" y="412.09" width="44.6" height="7.11" fill="#3fa9f5"/>
<text x="1193.2" y="435.3" font-size="9.7" fill="#555" text-anchor="middle">Rights &amp;</text>
<text x="1193.2" y="447.3" font-size="9.7" fill="#555" text-anchor="middle">Obligations</text>
<rect x="1264.1" y="412.09" width="44.6" height="7.11" fill="#96d93f"/>
<rect x="1264.1" y="355.24" width="44.6" height="56.86" fill="#8b52ee"/>
<text x="1286.4" y="435.3" font-size="9.7" fill="#555" text-anchor="middle">Presentation &amp;</text>
<text x="1286.4" y="447.3" font-size="9.7" fill="#555" text-anchor="middle">Disclosure</text>
<rect x="969.3" y="462.5" width="10" height="10" fill="#96d93f"/>
<text x="985.8" y="471.3" font-size="9.7" fill="#555" letter-spacing="0.1">REVISE</text>
<rect x="1039.5" y="462.5" width="10" height="10" fill="#3fa9f5"/>
<text x="1056.0" y="471.3" font-size="9.7" fill="#555" letter-spacing="0.1">DELETE</text>
<rect x="1111.5" y="462.5" width="10" height="10" fill="#f5b945"/>
<text x="1128.0" y="471.3" font-size="9.7" fill="#555" letter-spacing="0.1">KEEP</text>
<rect x="1171.5" y="462.5" width="10" height="10" fill="#8b52ee"/>
<text x="1188.0" y="471.3" font-size="9.7" fill="#555" letter-spacing="0.1">ADD</text>
<text x="655.5" y="509.3" font-size="12" fill="#555" text-anchor="middle">Automated Control Count - Current State</text>
<line x1="548.4" y1="525" x2="548.4" y2="630" stroke="#eeeeee" stroke-width="1"/>
<text x="548.4" y="647.2" font-size="9.7" fill="#555" text-anchor="middle">0</text>
<line x1="602.3" y1="525" x2="602.3" y2="630" stroke="#eeeeee" stroke-width="1"/>
<text x="602.3" y="647.2" font-size="9.7" fill="#555" text-anchor="middle">2.5</text>
<line x1="656.2" y1="525" x2="656.2" y2="630" stroke="#eeeeee" stroke-width="1"/>
<text x="656.2" y="647.2" font-size="9.7" fill="#555" text-anchor="middle">5</text>
<line x1="710.2" y1="525" x2="710.2" y2="630" stroke="#eeeeee" stroke-width="1"/>
<text x="710.2" y="647.2" font-size="9.7" fill="#555" text-anchor="middle">7.5</text>
<line x1="764.1" y1="525" x2="764.1" y2="630" stroke="#eeeeee" stroke-width="1"/>
<text x="764.1" y="647.2" font-size="9.7" fill="#555" text-anchor="middle">10</text>
<line x1="818.0" y1="525" x2="818.0" y2="630" stroke="#eeeeee" stroke-width="1"/>
<text x="818.0" y="647.2" font-size="9.7" fill="#555" text-anchor="middle">12.5</text>
<line x1="872.0" y1="525" x2="872.0" y2="630" stroke="#eeeeee" stroke-width="1"/>
<text x="872.0" y="647.2" font-size="9.7" fill="#555" text-anchor="middle">15</text>
<text x="537.5" y="541.8" font-size="9.7" fill="#555" text-anchor="end">Automated</text>
<rect x="548.4" y="558.4" width="43.1" height="12.8" fill="#d9632a"/>
<text x="537.5" y="568.4" font-size="9.7" fill="#555" text-anchor="end">IT Dependent - Manual</text>
<rect x="548.4" y="584.9" width="64.7" height="12.8" fill="#d9632a"/>
<text x="537.5" y="594.9" font-size="9.7" fill="#555" text-anchor="end">Manual</text>
<rect x="548.4" y="611.5" width="302.0" height="12.8" fill="#d9632a"/>
<text x="537.5" y="621.5" font-size="9.7" fill="#555" text-anchor="end">N/A</text>
<text x="1113.5" y="509.3" font-size="12" fill="#555" text-anchor="middle">Automated Control Count - Future State</text>
<line x1="1007.1" y1="525" x2="1007.1" y2="626" stroke="#eeeeee" stroke-width="1"/>
<text x="1007.1" y="642.3" font-size="9.7" fill="#555" text-anchor="middle">0</text>
<line x1="1061.1" y1="525" x2="1061.1" y2="626" stroke="#eeeeee" stroke-width="1"/>
<text x="1061.1" y="642.3" font-size="9.7" fill="#555" text-anchor="middle">2</text>
<line x1="1115.1" y1="525" x2="1115.1" y2="626" stroke="#eeeeee" stroke-width="1"/>
<text x="1115.1" y="642.3" font-size="9.7" fill="#555" text-anchor="middle">4</text>
<line x1="1169.1" y1="525" x2="1169.1" y2="626" stroke="#eeeeee" stroke-width="1"/>
<text x="1169.1" y="642.3" font-size="9.7" fill="#555" text-anchor="middle">6</text>
<line x1="1223.1" y1="525" x2="1223.1" y2="626" stroke="#eeeeee" stroke-width="1"/>
<text x="1223.1" y="642.3" font-size="9.7" fill="#555" text-anchor="middle">8</text>
<line x1="1277.1" y1="525" x2="1277.1" y2="626" stroke="#eeeeee" stroke-width="1"/>
<text x="1277.1" y="642.3" font-size="9.7" fill="#555" text-anchor="middle">10</text>
<line x1="1331.1" y1="525" x2="1331.1" y2="626" stroke="#eeeeee" stroke-width="1"/>
<text x="1331.1" y="642.3" font-size="9.7" fill="#555" text-anchor="middle">12</text>
<rect x="1007.1" y="534.0" width="297.0" height="15.8" fill="#d9632a"/>
<text x="996" y="545.5" font-size="9.7" fill="#555" text-anchor="end">Automated</text>
<rect x="1007.1" y="567.5" width="81.0" height="15.8" fill="#d9632a"/>
<text x="996" y="579.0" font-size="9.7" fill="#555" text-anchor="end">IT Dependent - Manual</text>
<rect x="1007.1" y="601.0" width="108.0" height="15.8" fill="#d9632a"/>
<text x="996" y="612.5" font-size="9.7" fill="#555" text-anchor="end">Manual</text>
</svg>
</body></html>
